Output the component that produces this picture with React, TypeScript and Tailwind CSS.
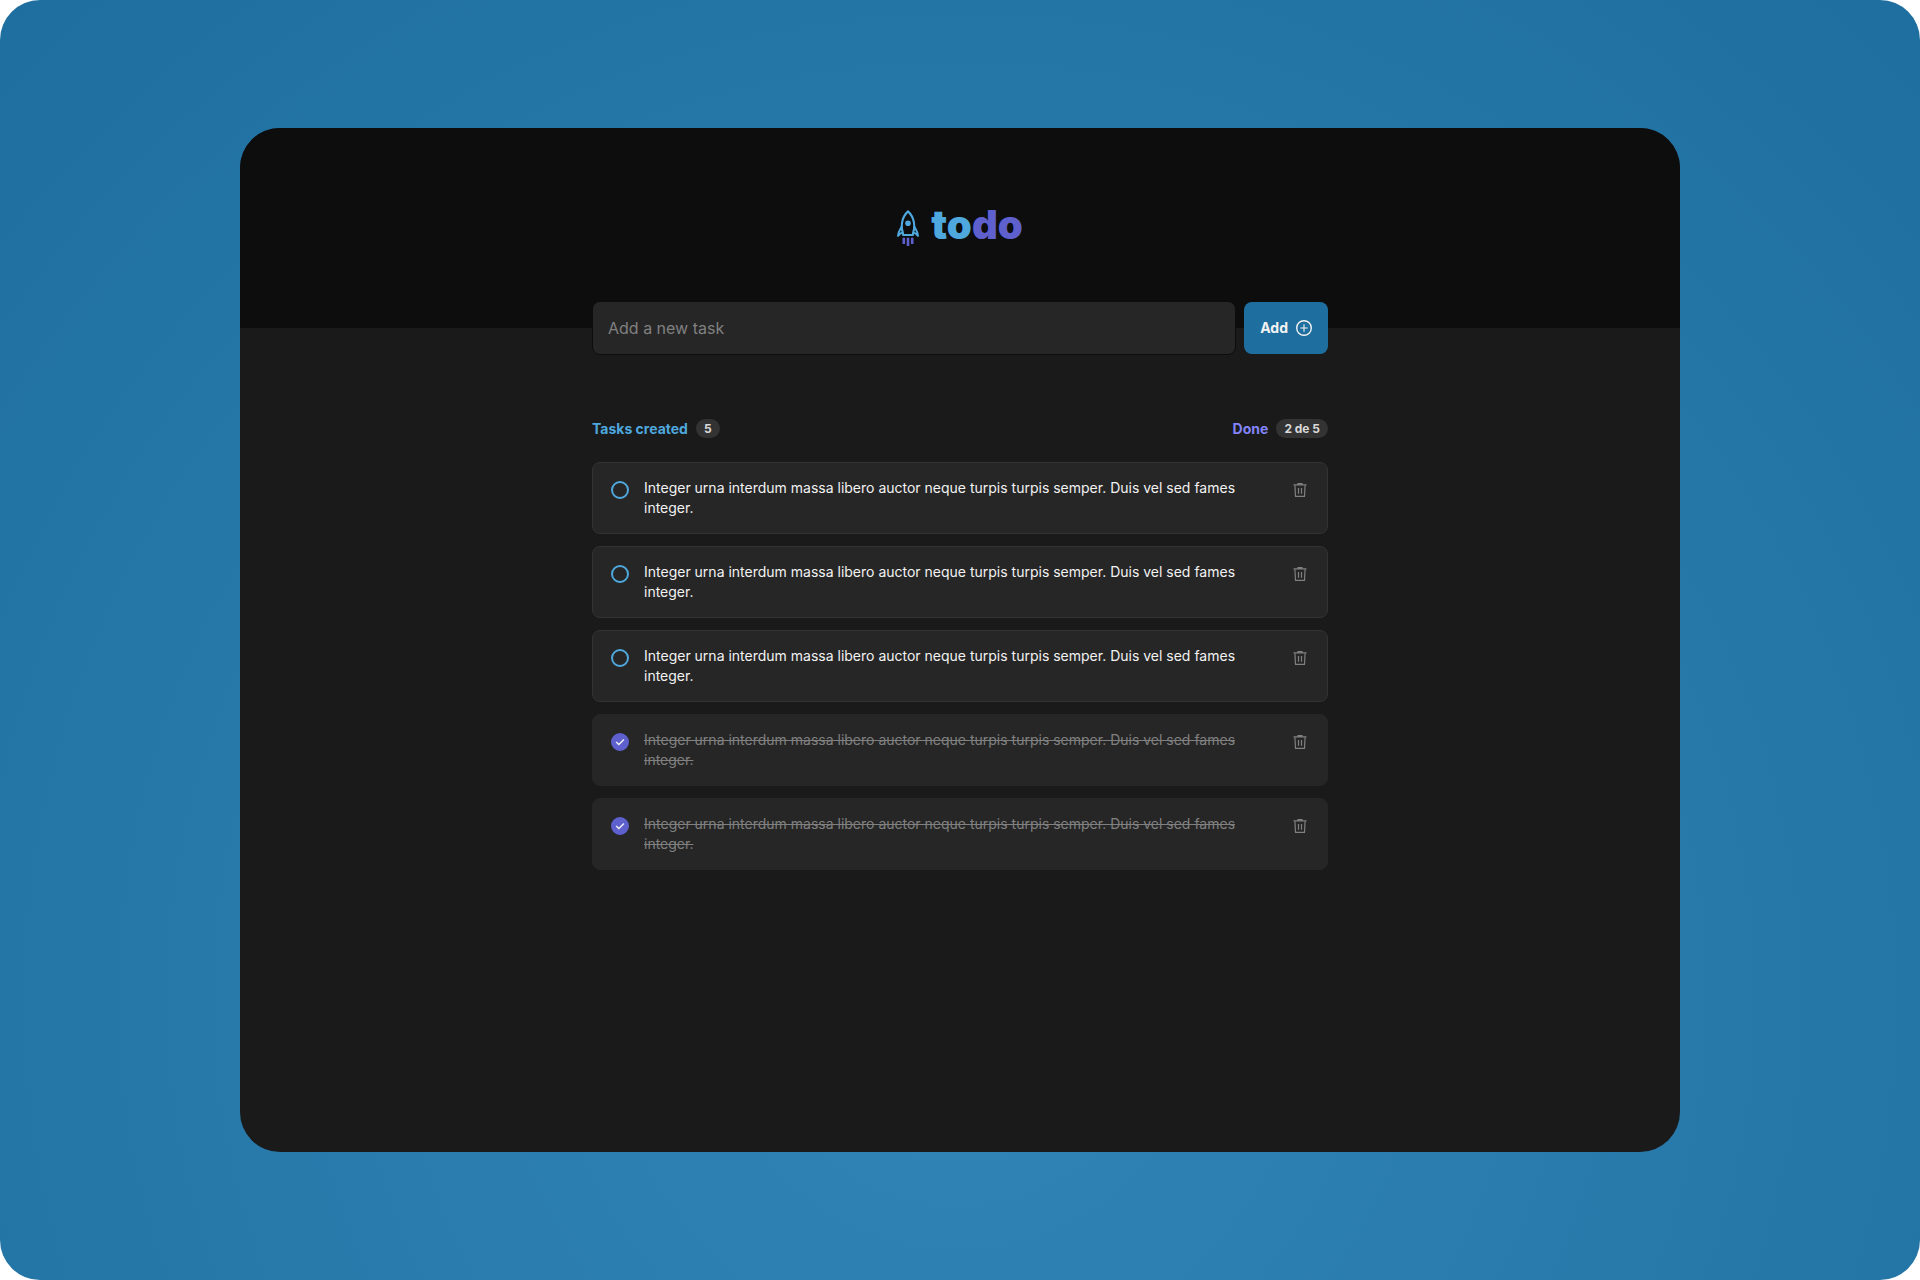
import { useState } from "react";

type Task = { id: number; text: string; done: boolean };

const TEXT =
  "Integer urna interdum massa libero auctor neque turpis turpis semper. Duis vel sed fames integer.";

const initialTasks: Task[] = [1, 2, 3, 4, 5].map((id) => ({ id, text: TEXT, done: id > 3 }));

function Rocket() {
  return (
    <svg width="22" height="36" viewBox="0 0 22 36" fill="none" aria-hidden="true">
      <path
        d="M6.200 25 L5.900 22.800 C3.800 17 4.300 7.500 11 1.400 C17.700 7.500 18.200 17 16.100 22.800 L15.800 25 Z"
        stroke="#4EA8DE"
        strokeWidth="2.100"
        strokeLinejoin="round"
      />
      <path
        d="M4.700 16 C4.500 18.500 1.200 20.500 1 25.800 C2.300 24 3.800 23 6 22.600 M17.300 16 C17.500 18.500 20.800 20.500 21 25.800 C19.700 24 18.200 23 16 22.600"
        stroke="#4EA8DE"
        strokeWidth="2"
        strokeLinejoin="round"
      />
      <circle cx="11" cy="13.300" r="2.800" fill="#4EA8DE" />
      <path d="M6.800 27.700 V34 M11 27.700 V36 M15.200 27.700 V34" stroke="#5E60CE" strokeWidth="2.600" />
    </svg>
  );
}

function PlusCircle() {
  return (
    <svg width="16" height="16" viewBox="0 0 16 16" fill="none" stroke="#F2F2F2" aria-hidden="true">
      <circle cx="8" cy="8" r="7.300" strokeWidth="1.400" />
      <path d="M8 4.300 V11.700 M4.300 8 H11.700" strokeWidth="1.100" />
    </svg>
  );
}

function Trash() {
  return (
    <svg width="14" height="14" viewBox="0 0 14 14" fill="none" stroke="#808080" aria-hidden="true">
      <path d="M0.500 1.900 H13.500 M5 1.600 V0.600 H9 V1.600" strokeWidth="1.200" />
      <path d="M1.900 2.200 L2.500 13.400 H11.500 L12.100 2.200" strokeWidth="1.200" />
      <path d="M5.500 5 V10.800 M8.500 5 V10.800" strokeWidth="1.200" />
    </svg>
  );
}

function Counter({ label, value, tone }: { label: string; value: string; tone: string }) {
  return (
    <div className="flex items-center gap-2">
      <h2 className={`text-sm leading-[18px] font-bold ${tone}`}>{label}</h2>
      <span className="min-w-6 rounded-full bg-[#333333] px-2 py-0.5 text-center text-xs leading-[15px] font-bold text-[#D9D9D9]">
        {value}
      </span>
    </div>
  );
}

function TaskItem({ task, onToggle, onRemove }: { task: Task; onToggle: () => void; onRemove: () => void }) {
  return (
    <li
      className={`flex items-start gap-3 rounded-lg border bg-[#262626] p-[15px] ${
        task.done ? "border-[#262626]" : "border-[#333333]"
      }`}
    >
      <label className="flex flex-1 items-start gap-3">
        <span className="grid size-6 shrink-0 place-items-center">
          <input
            type="checkbox"
            checked={task.done}
            onChange={onToggle}
            className="col-start-1 row-start-1 size-[18px] appearance-none rounded-full border-2 border-[#4EA8DE] checked:border-[#5E60CE] checked:bg-[#5E60CE]"
          />
          {task.done && (
            <svg
              width="10"
              height="8"
              viewBox="0 0 10 8"
              fill="none"
              aria-hidden="true"
              className="pointer-events-none col-start-1 row-start-1"
            >
              <path d="M1.200 4 L3.900 6.600 L8.900 1.600" stroke="#F2F2F2" strokeWidth="1.400" />
            </svg>
          )}
        </span>
        <span className={`flex-1 text-sm leading-5 ${task.done ? "text-[#808080] line-through" : "text-[#F2F2F2]"}`}>
          {task.text}
        </span>
      </label>
      <button type="button" aria-label="Delete task" onClick={onRemove} className="grid size-6 place-items-center">
        <Trash />
      </button>
    </li>
  );
}

export default function App() {
  const [tasks, setTasks] = useState(initialTasks);
  const [draft, setDraft] = useState("");
  const done = tasks.filter((t) => t.done).length;

  return (
    <div className="min-h-screen bg-white font-['Inter',sans-serif]">
      <div className="flex min-h-screen flex-col rounded-[40px] bg-[radial-gradient(circle_farthest-corner_at_50%_78%,#3185B7_0%,#1E6F9F_100%)] px-[12.5%] py-32">
        <main className="flex flex-1 flex-col overflow-hidden rounded-[40px] bg-[#1A1A1A]">
          <header className="flex h-[200px] items-center justify-center gap-3 bg-[#0D0D0D]">
            <Rocket />
            <h1 className="pb-1.5 text-[40px] leading-[48px] font-black text-[#4EA8DE]">
              to<span className="text-[#5E60CE]">do</span>
            </h1>
          </header>
          <div className="mx-auto -mt-[27px] w-full max-w-[736px]">
            <form
              className="flex items-center gap-2"
              onSubmit={(e) => {
                e.preventDefault();
                if (!draft.trim()) return;
                setTasks([...tasks, { id: Date.now(), text: draft, done: false }]);
                setDraft("");
              }}
            >
              <input
                aria-label="New task"
                placeholder="Add a new task"
                value={draft}
                onChange={(e) => setDraft(e.target.value)}
                className="h-[54px] min-w-0 flex-1 rounded-lg border border-[#0D0D0D] bg-[#262626] px-[15px] text-base text-[#F2F2F2] outline-none placeholder:text-[#808080]"
              />
              <button
                type="submit"
                className="flex h-[52px] items-center gap-2 rounded-lg bg-[#1E6F9F] px-4 text-sm font-bold text-[#F2F2F2]"
              >
                Add
                <PlusCircle />
              </button>
            </form>
            <section className="mt-16 flex flex-col gap-6">
              <div className="flex items-center justify-between">
                <Counter label="Tasks created" value={`${tasks.length}`} tone="text-[#4EA8DE]" />
                <Counter label="Done" value={`${done} de ${tasks.length}`} tone="text-[#8284FA]" />
              </div>
              <ul className="flex flex-col gap-3">
                {tasks.map((task) => (
                  <TaskItem
                    key={task.id}
                    task={task}
                    onToggle={() => setTasks(tasks.map((t) => (t.id === task.id ? { ...t, done: !t.done } : t)))}
                    onRemove={() => setTasks(tasks.filter((t) => t.id !== task.id))}
                  />
                ))}
              </ul>
            </section>
          </div>
        </main>
      </div>
    </div>
  );
}
